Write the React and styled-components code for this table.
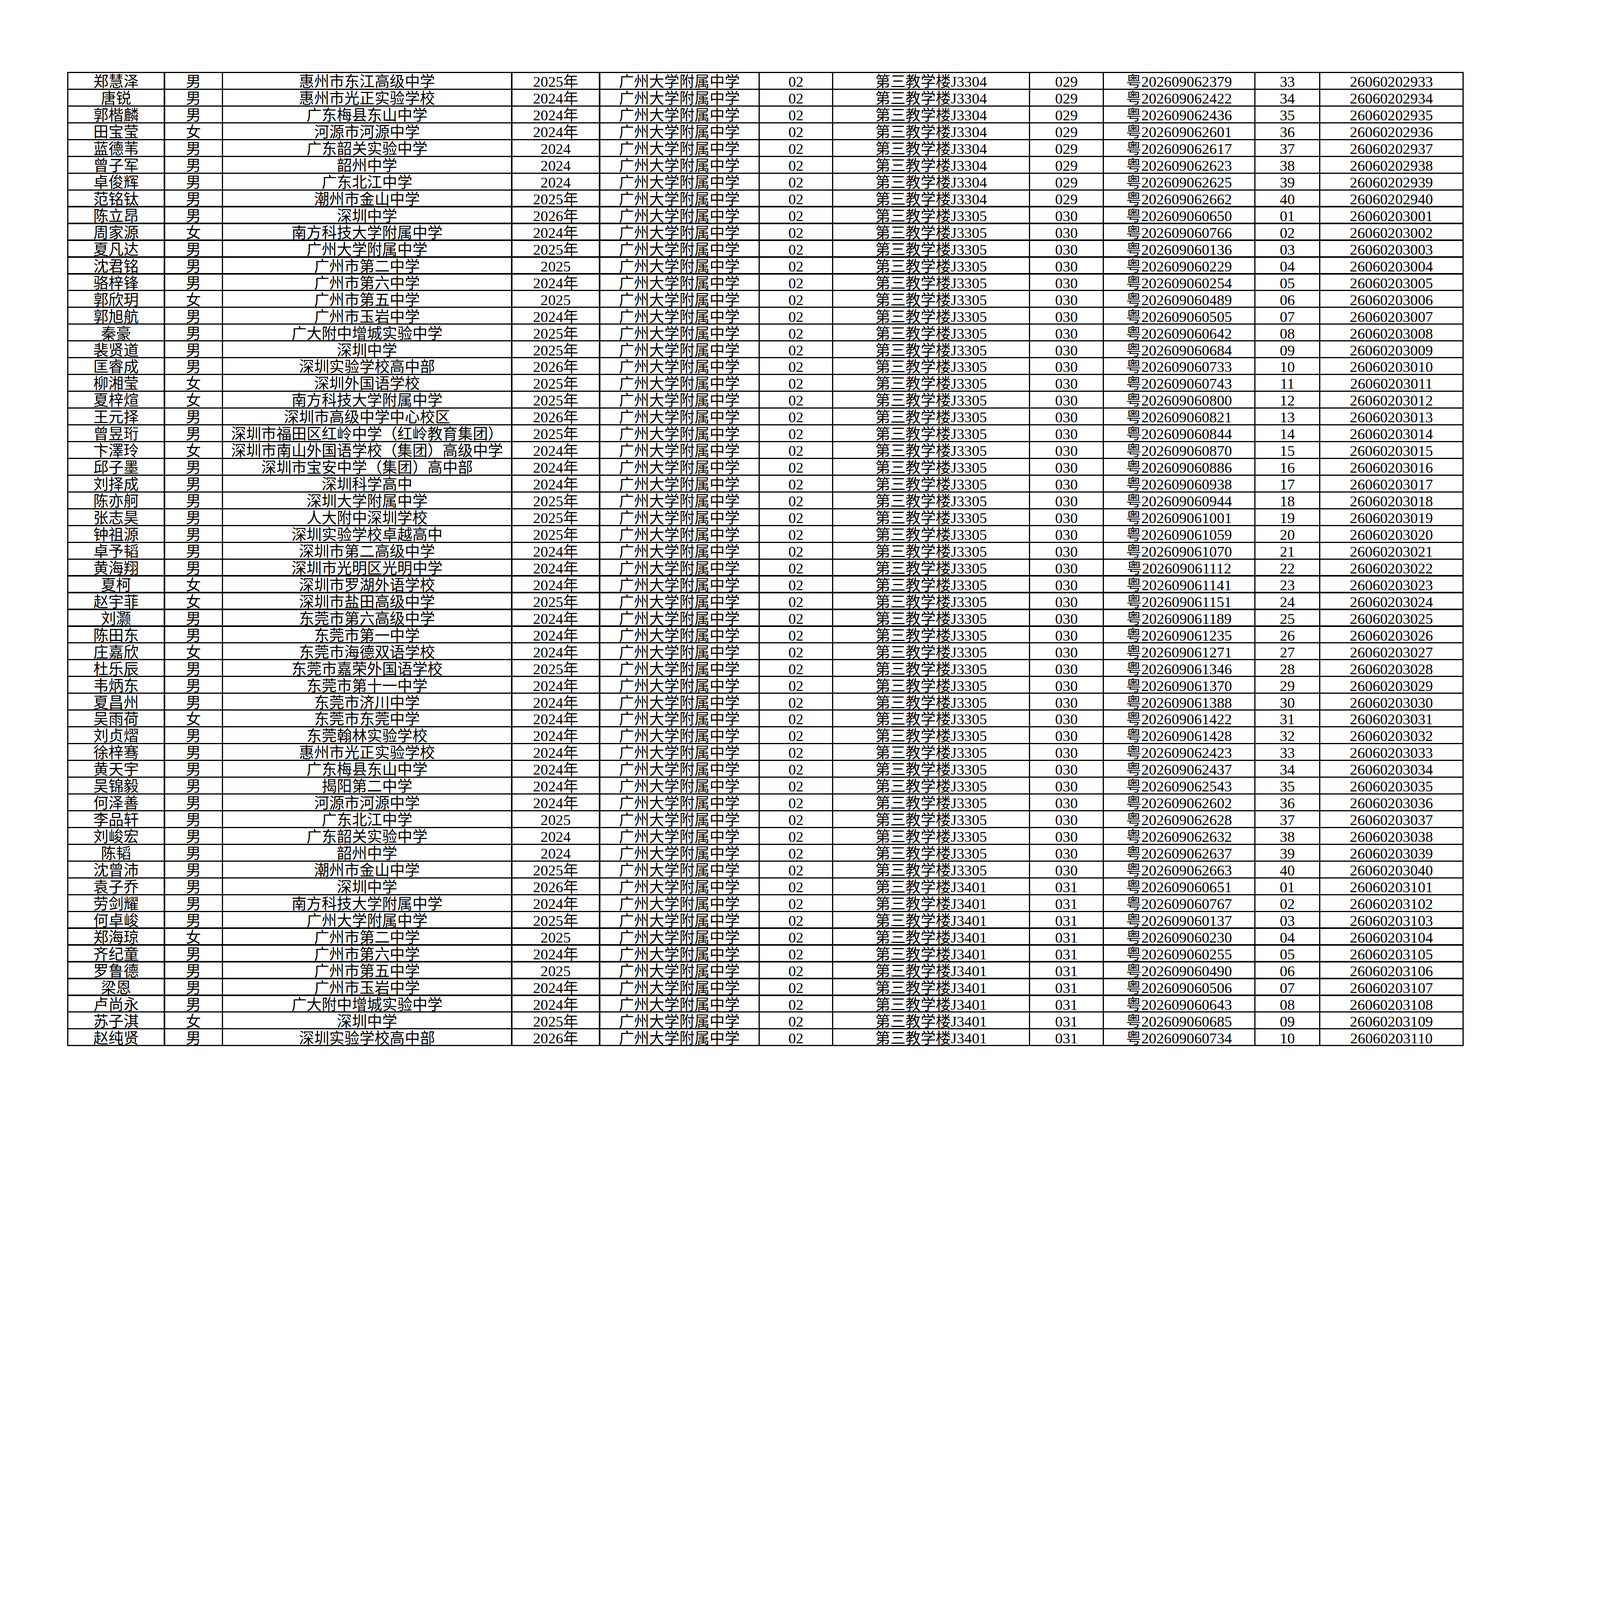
import React from 'react'
import styled, { createGlobalStyle } from 'styled-components'

const GlobalStyle = createGlobalStyle`
    html, body {
        margin: 0;
        padding: 0;
        background: #ffffff;
        overflow: hidden;
    }
`

const Page = styled.div`
    width: 6349px;
    height: 4489px;
    box-sizing: border-box;
    padding: 285px 0 0 266px;
    background: #ffffff;
    font-family: 'Liberation Serif', 'Noto Sans CJK SC', serif;
    color: #000000;
`

const widths = [379, 225, 1143, 344, 628, 287, 776, 288, 596, 253, 563]

const Sheet = styled.div`
    display: grid;
    grid-template-columns: ${widths.map((w) => `${w}px`).join(' ')};
    grid-auto-rows: 61.6px;
    gap: 5px;
    padding: 5px;
    width: fit-content;
    background: #000000;
`

const Cell = styled.div`
    display: flex;
    align-items: flex-end;
    justify-content: center;
    background: #ffffff;
    font-size: 60px;
    line-height: 52px;
    white-space: nowrap;
`

const rows = [
    ['郑慧泽', '男', '惠州市东江高级中学', '2025年', 'J3304', '029', '202609062379', '33', '26060202933'],
    ['唐锐', '男', '惠州市光正实验学校', '2024年', 'J3304', '029', '202609062422', '34', '26060202934'],
    ['郭楷麟', '男', '广东梅县东山中学', '2024年', 'J3304', '029', '202609062436', '35', '26060202935'],
    ['田宝莹', '女', '河源市河源中学', '2024年', 'J3304', '029', '202609062601', '36', '26060202936'],
    ['蓝德苇', '男', '广东韶关实验中学', '2024', 'J3304', '029', '202609062617', '37', '26060202937'],
    ['曾子军', '男', '韶州中学', '2024', 'J3304', '029', '202609062623', '38', '26060202938'],
    ['卓俊辉', '男', '广东北江中学', '2024', 'J3304', '029', '202609062625', '39', '26060202939'],
    ['范铭钛', '男', '潮州市金山中学', '2025年', 'J3304', '029', '202609062662', '40', '26060202940'],
    ['陈立昂', '男', '深圳中学', '2026年', 'J3305', '030', '202609060650', '01', '26060203001'],
    ['周家源', '女', '南方科技大学附属中学', '2024年', 'J3305', '030', '202609060766', '02', '26060203002'],
    ['夏凡达', '男', '广州大学附属中学', '2025年', 'J3305', '030', '202609060136', '03', '26060203003'],
    ['沈君铭', '男', '广州市第二中学', '2025', 'J3305', '030', '202609060229', '04', '26060203004'],
    ['骆梓锋', '男', '广州市第六中学', '2024年', 'J3305', '030', '202609060254', '05', '26060203005'],
    ['郭欣玥', '女', '广州市第五中学', '2025', 'J3305', '030', '202609060489', '06', '26060203006'],
    ['郭旭航', '男', '广州市玉岩中学', '2024年', 'J3305', '030', '202609060505', '07', '26060203007'],
    ['秦豪', '男', '广大附中增城实验中学', '2025年', 'J3305', '030', '202609060642', '08', '26060203008'],
    ['裴贤道', '男', '深圳中学', '2025年', 'J3305', '030', '202609060684', '09', '26060203009'],
    ['匡睿成', '男', '深圳实验学校高中部', '2026年', 'J3305', '030', '202609060733', '10', '26060203010'],
    ['柳湘莹', '女', '深圳外国语学校', '2025年', 'J3305', '030', '202609060743', '11', '26060203011'],
    ['夏梓煊', '女', '南方科技大学附属中学', '2025年', 'J3305', '030', '202609060800', '12', '26060203012'],
    ['王元择', '男', '深圳市高级中学中心校区', '2026年', 'J3305', '030', '202609060821', '13', '26060203013'],
    ['曾昱珩', '男', '深圳市福田区红岭中学（红岭教育集团）', '2025年', 'J3305', '030', '202609060844', '14', '26060203014'],
    ['卞澤玲', '女', '深圳市南山外国语学校（集团）高级中学', '2024年', 'J3305', '030', '202609060870', '15', '26060203015'],
    ['邱子墨', '男', '深圳市宝安中学（集团）高中部', '2024年', 'J3305', '030', '202609060886', '16', '26060203016'],
    ['刘择成', '男', '深圳科学高中', '2024年', 'J3305', '030', '202609060938', '17', '26060203017'],
    ['陈亦舸', '男', '深圳大学附属中学', '2025年', 'J3305', '030', '202609060944', '18', '26060203018'],
    ['张志昊', '男', '人大附中深圳学校', '2025年', 'J3305', '030', '202609061001', '19', '26060203019'],
    ['钟祖源', '男', '深圳实验学校卓越高中', '2025年', 'J3305', '030', '202609061059', '20', '26060203020'],
    ['卓予韬', '男', '深圳市第二高级中学', '2024年', 'J3305', '030', '202609061070', '21', '26060203021'],
    ['黄海翔', '男', '深圳市光明区光明中学', '2024年', 'J3305', '030', '202609061112', '22', '26060203022'],
    ['夏柯', '女', '深圳市罗湖外语学校', '2024年', 'J3305', '030', '202609061141', '23', '26060203023'],
    ['赵宇菲', '女', '深圳市盐田高级中学', '2025年', 'J3305', '030', '202609061151', '24', '26060203024'],
    ['刘灏', '男', '东莞市第六高级中学', '2024年', 'J3305', '030', '202609061189', '25', '26060203025'],
    ['陈田东', '男', '东莞市第一中学', '2024年', 'J3305', '030', '202609061235', '26', '26060203026'],
    ['庄嘉欣', '女', '东莞市海德双语学校', '2024年', 'J3305', '030', '202609061271', '27', '26060203027'],
    ['杜乐辰', '男', '东莞市嘉荣外国语学校', '2025年', 'J3305', '030', '202609061346', '28', '26060203028'],
    ['韦炳东', '男', '东莞市第十一中学', '2024年', 'J3305', '030', '202609061370', '29', '26060203029'],
    ['夏昌州', '男', '东莞市济川中学', '2024年', 'J3305', '030', '202609061388', '30', '26060203030'],
    ['吴雨荷', '女', '东莞市东莞中学', '2024年', 'J3305', '030', '202609061422', '31', '26060203031'],
    ['刘贞熠', '男', '东莞翰林实验学校', '2024年', 'J3305', '030', '202609061428', '32', '26060203032'],
    ['徐梓骞', '男', '惠州市光正实验学校', '2024年', 'J3305', '030', '202609062423', '33', '26060203033'],
    ['黄天宇', '男', '广东梅县东山中学', '2024年', 'J3305', '030', '202609062437', '34', '26060203034'],
    ['吴锦毅', '男', '揭阳第二中学', '2024年', 'J3305', '030', '202609062543', '35', '26060203035'],
    ['何泽善', '男', '河源市河源中学', '2024年', 'J3305', '030', '202609062602', '36', '26060203036'],
    ['李品轩', '男', '广东北江中学', '2025', 'J3305', '030', '202609062628', '37', '26060203037'],
    ['刘峻宏', '男', '广东韶关实验中学', '2024', 'J3305', '030', '202609062632', '38', '26060203038'],
    ['陈韬', '男', '韶州中学', '2024', 'J3305', '030', '202609062637', '39', '26060203039'],
    ['沈曾沛', '男', '潮州市金山中学', '2025年', 'J3305', '030', '202609062663', '40', '26060203040'],
    ['袁子乔', '男', '深圳中学', '2026年', 'J3401', '031', '202609060651', '01', '26060203101'],
    ['劳剑耀', '男', '南方科技大学附属中学', '2024年', 'J3401', '031', '202609060767', '02', '26060203102'],
    ['何卓峻', '男', '广州大学附属中学', '2025年', 'J3401', '031', '202609060137', '03', '26060203103'],
    ['郑海琼', '女', '广州市第二中学', '2025', 'J3401', '031', '202609060230', '04', '26060203104'],
    ['齐纪童', '男', '广州市第六中学', '2024年', 'J3401', '031', '202609060255', '05', '26060203105'],
    ['罗鲁德', '男', '广州市第五中学', '2025', 'J3401', '031', '202609060490', '06', '26060203106'],
    ['梁恩', '男', '广州市玉岩中学', '2024年', 'J3401', '031', '202609060506', '07', '26060203107'],
    ['卢尚永', '男', '广大附中增城实验中学', '2024年', 'J3401', '031', '202609060643', '08', '26060203108'],
    ['苏子淇', '女', '深圳中学', '2025年', 'J3401', '031', '202609060685', '09', '26060203109'],
    ['赵纯贤', '男', '深圳实验学校高中部', '2026年', 'J3401', '031', '202609060734', '10', '26060203110'],
]

function App() {
    // fit the 6349px sheet to whatever the viewport width really is
    const scale =
        typeof window !== 'undefined' && window.innerWidth
            ? window.innerWidth / 6349
            : 1

    return (
        <>
            <GlobalStyle />
            <Page style={{ zoom: scale }}>
                <Sheet>
                    {rows.map((r) => {
                        const cells = [
                            r[0],
                            r[1],
                            r[2],
                            r[3],
                            '广州大学附属中学',
                            '02',
                            `第三教学楼${r[4]}`,
                            r[5],
                            `粤${r[6]}`,
                            r[7],
                            r[8],
                        ]
                        return cells.map((c, i) => (
                            <Cell key={`${r[8]}-${i}`}>{c}</Cell>
                        ))
                    })}
                </Sheet>
            </Page>
        </>
    )
}

export default App
